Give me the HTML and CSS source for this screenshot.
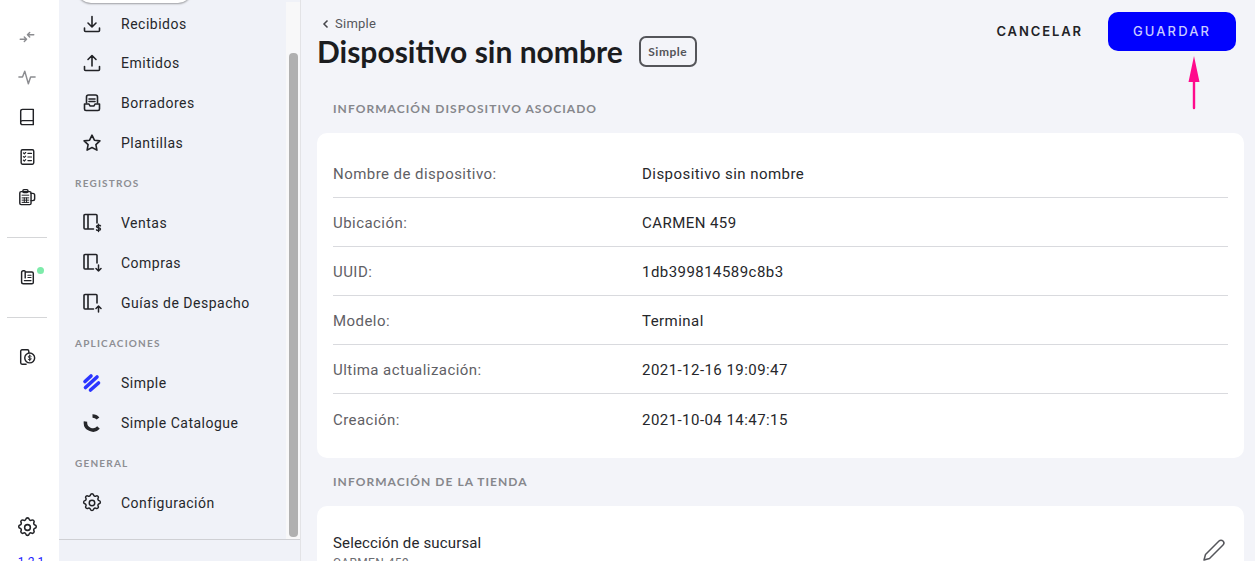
FILE: index.html
```html
<!DOCTYPE html>
<html lang="es">
<head>
<meta charset="utf-8">
<title>Dispositivo sin nombre</title>
<link rel="stylesheet" href="styles.css">
</head>
<body>
<div class="app">
  <nav class="rail">
    <div class="rail-item muted"><svg class="ic" viewBox="0 0 20 20"><path d="M2.500 12.500h7M7 10 9.500 12.500 7 15M17.500 7.500h-7M13 5 10.500 7.500 13 10"/></svg></div>
    <div class="rail-item muted"><svg class="ic" viewBox="0 0 20 20"><path d="M1 10h4l2.500-6.500 4 14 2.500-7.500h5"/></svg></div>
    <div class="rail-item"><svg class="ic" viewBox="0 0 20 20"><path d="M3 16V3.500A2 2 0 0 1 5 1.500h12v17H5a2 2 0 0 1-2-2.500zM3 16a2 2 0 0 1 2-2h12"/></svg></div>
    <div class="rail-item"><svg class="ic" viewBox="0 0 20 20"><rect x="3.500" y="2" width="14" height="16" rx="1.500"/><path d="M6 5.500l1 1 1.500-1.500M11 6h4M6 9.500l1 1 1.500-1.500M11 10h4M6 13.500l1 1 1.500-1.500M11 14h4" stroke-width="1.300"/></svg></div>
    <div class="rail-item"><svg class="ic" viewBox="0 0 20 20"><rect x="2" y="4" width="12.500" height="14.500" rx="1.500"/><rect x="5.500" y="1.800" width="5.500" height="3.200" rx="1"/><path d="M4.500 8h7.500M4.500 11h7.500M4.500 13.500h7.500M4.500 16h7.500M7 11v5M9.500 11v5" stroke-width="1.100"/><path d="M14.500 6H16.500a2 2 0 0 1 2 2v4a2 2 0 0 1-2 2h-2"/></svg></div>
    <div class="rail-sep"></div>
    <div class="rail-item dotted"><svg class="ic" viewBox="0 0 20 20"><path d="M8 4.500h7.500a1.500 1.500 0 0 1 1.500 1.500v10a1.500 1.500 0 0 1-1.500 1.500H6A2 2 0 0 1 4 15.500V5a2 2 0 0 1 2-2h1a1 1 0 0 1 1 1v7"/><path d="M11 8h3.500M11 10.500h3.500M7 14h7.500" stroke-width="1.200"/></svg><span class="dot"></span></div>
    <div class="rail-sep"></div>
    <div class="rail-item"><svg class="ic" viewBox="0 0 20 20"><path d="M9 18H4.500A1.500 1.500 0 0 1 3 16.500V3.500A1.500 1.500 0 0 1 4.500 2h6A1.500 1.500 0 0 1 12 3.500V5"/><circle cx="13" cy="11" r="5.500"/><path d="M14.700 9.200c-.5-.7-3.300-.8-3.300.6 0 1.500 3.300.8 3.300 2.300 0 1.400-2.700 1.300-3.400.5M13 7.700v6.600" stroke-width="1.100"/></svg></div>
    <div class="rail-foot">
      <svg class="ic gear" viewBox="0 0 24 24"><path d="M10.300 3.300a1.750 1.750 0 0 1 3.400 0 1.750 1.750 0 0 0 2.600 1.100 1.750 1.750 0 0 1 2.400 2.400 1.750 1.750 0 0 0 1.100 2.600 1.750 1.750 0 0 1 0 3.400 1.750 1.750 0 0 0-1.100 2.600 1.750 1.750 0 0 1-2.400 2.400 1.750 1.750 0 0 0-2.600 1.100 1.750 1.750 0 0 1-3.400 0 1.750 1.750 0 0 0-2.600-1.100 1.750 1.750 0 0 1-2.400-2.400 1.750 1.750 0 0 0-1.100-2.600 1.750 1.750 0 0 1 0-3.400 1.750 1.750 0 0 0 1.100-2.600 1.750 1.750 0 0 1 2.400-2.400 1.750 1.750 0 0 0 2.600-1.100z"/><circle cx="12" cy="12" r="3"/></svg>
      <span class="version">1.2.1</span>
    </div>
  </nav>

  <aside class="side">
    <div class="side-scroll">
      <div class="side-list">
        <div class="side-pill"></div>
        <a class="side-item first"><svg class="ic" viewBox="0 0 20 20"><path d="M10 2.500v10M6 9l4 4 4-4M2.500 14v2.500a1 1 0 0 0 1 1h13a1 1 0 0 0 1-1V14"/></svg>Recibidos</a>
        <a class="side-item"><svg class="ic" viewBox="0 0 20 20"><path d="M10 13V3M6 6.500l4-4 4 4M2.500 13.500v3a1 1 0 0 0 1 1h13a1 1 0 0 0 1-1v-3"/></svg>Emitidos</a>
        <a class="side-item"><svg class="ic" viewBox="0 0 20 20"><path d="M4.500 10V4a2 2 0 0 1 2-2h7a2 2 0 0 1 2 2v6M7 6h6M7 8.500h6"/><path d="M2.500 11h4.500l1 2h4l1-2h4.500v5a1.500 1.500 0 0 1-1.500 1.500H4A1.500 1.500 0 0 1 2.500 16z"/></svg>Borradores</a>
        <a class="side-item"><svg class="ic" viewBox="0 0 20 20"><path d="M10 2.200l2.400 5 5.500.7-4 3.800 1 5.400-4.900-2.600-4.900 2.600 1-5.400-4-3.800 5.500-.7z"/></svg>Plantillas</a>
        <div class="side-label">REGISTROS</div>
        <a class="side-item"><svg class="ic" viewBox="0 0 20 20"><path d="M15 10V2.500a1 1 0 0 0-1-1H3a1 1 0 0 0-1 1V15a1 1 0 0 0 1 1h8.500M6 1.500V16"/><path d="M18.500 12.800c-.5-.8-4-.8-4 .8 0 1.600 4 .8 4 2.500 0 1.600-3.500 1.600-4 .7M16.500 11.200v7.300" stroke-width="1.400"/></svg>Ventas</a>
        <a class="side-item"><svg class="ic" viewBox="0 0 20 20"><path d="M15 10V2.500a1 1 0 0 0-1-1H3a1 1 0 0 0-1 1V15a1 1 0 0 0 1 1h8.500M6 1.500V16"/><path d="M16.500 12v6M14 15.500l2.500 2.500 2.500-2.500" stroke-width="1.500"/></svg>Compras</a>
        <a class="side-item"><svg class="ic" viewBox="0 0 20 20"><path d="M15 10V2.500a1 1 0 0 0-1-1H3a1 1 0 0 0-1 1V15a1 1 0 0 0 1 1h8.500M6 1.500V16"/><path d="M16.500 19v-6M14 15.500l2.500-2.500 2.500 2.500" stroke-width="1.500"/></svg>Guías de Despacho</a>
        <div class="side-label">APLICACIONES</div>
        <a class="side-item"><svg class="ic brand" viewBox="0 0 20 20"><path d="M3 8.500 9 3M3.500 14.500 15 4M8.500 17 16.500 10"/></svg>Simple</a>
        <a class="side-item"><svg class="ic brand-dark" viewBox="0 0 20 20"><path d="M3.500 8.500a7.500 7.500 0 0 0 13 6M10.500 3a7 7 0 0 1 5.500 2.500"/></svg>Simple Catalogue</a>
        <div class="side-label">GENERAL</div>
        <a class="side-item"><svg class="ic gear-lg" viewBox="0 0 24 24"><path d="M10.300 3.300a1.750 1.750 0 0 1 3.400 0 1.750 1.750 0 0 0 2.600 1.100 1.750 1.750 0 0 1 2.400 2.400 1.750 1.750 0 0 0 1.100 2.600 1.750 1.750 0 0 1 0 3.400 1.750 1.750 0 0 0-1.100 2.600 1.750 1.750 0 0 1-2.400 2.400 1.750 1.750 0 0 0-2.600 1.100 1.750 1.750 0 0 1-3.400 0 1.750 1.750 0 0 0-2.600-1.100 1.750 1.750 0 0 1-2.400-2.400 1.750 1.750 0 0 0-1.100-2.600 1.750 1.750 0 0 1 0-3.400 1.750 1.750 0 0 0 1.100-2.600 1.750 1.750 0 0 1 2.400-2.400 1.750 1.750 0 0 0 2.600-1.100z"/><circle cx="12" cy="12" r="3"/></svg>Configuración</a>
      </div>
      <div class="side-track"><div class="side-thumb"></div></div>
    </div>
  </aside>

  <main class="main">
    <header class="head">
      <div class="head-left">
        <div class="crumb"><svg class="crumb-ic" viewBox="0 0 10 10"><path d="M6.500 1.500 3 5l3.500 3.500"/></svg>Simple</div>
        <div class="title-row">
          <h1 class="title">Dispositivo sin nombre</h1>
          <span class="badge">Simple</span>
        </div>
      </div>
      <div class="actions">
        <button class="btn-text">CANCELAR</button>
        <button class="btn-primary">GUARDAR</button>
      </div>
    </header>

    <h2 class="section">INFORMACIÓN DISPOSITIVO ASOCIADO</h2>
    <section class="card info">
      <div class="row"><span class="row-key">Nombre de dispositivo:</span><span class="row-val">Dispositivo sin nombre</span></div>
      <div class="row"><span class="row-key">Ubicación:</span><span class="row-val">CARMEN 459</span></div>
      <div class="row"><span class="row-key">UUID:</span><span class="row-val">1db399814589c8b3</span></div>
      <div class="row"><span class="row-key">Modelo:</span><span class="row-val">Terminal</span></div>
      <div class="row"><span class="row-key">Ultima actualización:</span><span class="row-val">2021-12-16 19:09:47</span></div>
      <div class="row"><span class="row-key">Creación:</span><span class="row-val">2021-10-04 14:47:15</span></div>
    </section>

    <h2 class="section second">INFORMACIÓN DE LA TIENDA</h2>
    <section class="card store">
      <div class="store-text">
        <div class="store-title">Selección de sucursal</div>
        <div class="store-sub">CARMEN 459</div>
      </div>
      <svg class="pencil" viewBox="0 0 24 24"><path d="M17 3a2.800 2.800 0 0 1 4 4L7.500 20.500 2 22l1.500-5.500z"/></svg>
    </section>

    <svg class="arrow" viewBox="0 0 12 54"><path d="M6 0 11.500 26H7.200V52a1.200 1.200 0 0 1-2.400 0V26H.5z"/></svg>
  </main>
</div>
</body>
</html>
```
FILE: styles.css
```css
* { box-sizing: border-box; }
html, body { margin: 0; height: 561px; overflow: hidden; }
body { font-family: Roboto, "Liberation Sans", sans-serif; color: #212226; background: #f3f4f9; }

.app { display: flex; height: 561px; overflow: hidden; }

.ic { width: 20px; height: 20px; fill: none; stroke: #212226; stroke-width: 1.600; stroke-linecap: round; stroke-linejoin: round; flex: none; }

.rail { width: 59px; flex: none; background: #fff; display: flex; flex-direction: column; padding: 17px 5px 0 0; }
.rail-item { height: 40px; display: flex; align-items: center; justify-content: center; position: relative; flex: none; }
.rail-item .ic { width: 18px; height: 18px; }
.muted .ic { stroke: #8b8c90; }
.rail-sep { height: 40px; display: flex; align-items: center; padding: 0 7px; flex: none; }
.rail-sep::before { content: ""; flex: 1; height: 1px; background: #d5d6d8; }
.dot { position: absolute; left: 37px; top: 10px; width: 7px; height: 7px; border-radius: 50%; background: #7debaa; }
.rail-foot { margin-top: auto; display: flex; flex-direction: column; align-items: center; gap: 16px; height: 45px; flex: none; }
.rail-foot .gear { width: 23px; height: 23px; }
.version { font-size: 12px; line-height: 14px; color: #1a1aff; padding-left: 8px; white-space: nowrap; }

.side { width: 242px; flex: none; background: #f0f2f8; border-right: 1px solid #e3e3e6; }
.side-scroll { display: flex; height: 540px; border-bottom: 1px solid #cfd0d4; }
.side-list { flex: 1; min-width: 0; position: relative; padding-top: 3px; }
.side-pill { position: absolute; left: 18px; top: -12px; width: 115px; height: 15px; background: #fff; border-radius: 0 0 14px 14px; box-shadow: 0 1px 2px rgba(0, 0, 0, .35); }
.side-item { display: flex; align-items: center; gap: 19px; height: 40px; padding-left: 23px; font-size: 14px; letter-spacing: .5px; color: #26272b; white-space: nowrap; }
.side-item.first { margin-top: 1px; height: 39px; }
.gear-lg { width: 22px; height: 22px; margin: 0 -1px; }
.side-label { height: 40px; display: flex; align-items: center; padding-left: 16px; font-family: Lato, sans-serif; font-weight: 700; font-size: 10px; letter-spacing: 1.200px; color: #8d8e93; }
.brand { stroke: #2b35ff; stroke-width: 3.600; }
.brand-dark { stroke: #26272b; stroke-width: 3.500; stroke-linecap: butt; }

.side-track { width: 14px; flex: none; background: #f8f8f9; margin-top: 2px; padding: 51px 2px 2px 3px; }
.side-thumb { height: 484px; background: #b0b0b0; border-radius: 4px; }

.main { flex: 1; min-width: 0; position: relative; padding: 0 11px 0 16px; background: #f3f4f9; }
.head { display: flex; justify-content: space-between; align-items: flex-start; height: 84px; }
.head-left { padding-top: 15px; }
.crumb { display: flex; align-items: center; gap: 4px; height: 17px; font-size: 13px; letter-spacing: .25px; color: #55565b; padding-left: 4px; }
.crumb-ic { width: 10px; height: 10px; fill: none; stroke: #44454a; stroke-width: 1.500; }
.title-row { display: flex; align-items: center; gap: 16px; margin-top: 3px; }
.title { margin: 0; font-family: Lato, sans-serif; font-weight: 700; font-size: 30px; line-height: 32px; color: #1b1c1f; white-space: nowrap; }
.badge { width: 58px; height: 31px; border: 2px solid #54555a; border-radius: 7px; display: flex; align-items: center; justify-content: center; font-family: Lato, sans-serif; font-weight: 700; font-size: 12px; letter-spacing: .5px; color: #54555a; }
.actions { display: flex; align-items: center; gap: 25px; padding-top: 12px; padding-right: 8px; }
.btn-text, .btn-primary { border: 0; font-family: Inter, sans-serif; font-weight: 600; font-size: 13px; letter-spacing: 1.900px; background: none; padding: 0 0 1px; }
.btn-text { color: #222327; }
.btn-primary { width: 128px; height: 39px; background: #0000ff; color: #c9ccff; border-radius: 10px; font-weight: 500; letter-spacing: 2.100px; }

.section { margin: 0; height: 49px; padding: 17px 0 0 16px; font-family: Lato, sans-serif; font-weight: 700; font-size: 12px; line-height: 16px; letter-spacing: 1.050px; color: #86878c; }
.section.second { margin-top: 0; height: 48px; padding-top: 16px; }

.card { background: #fff; border-radius: 10px; }
.info { height: 325px; padding: 16px 16px 0; }
.row { height: 49px; display: flex; align-items: center; padding-top: 2px; font-size: 15px; letter-spacing: .45px; border-bottom: 1px solid #d9dade; }
.row:last-child { border-bottom: 0; }
.row-key { width: 309px; flex: none; color: #5f6065; }
.row-val { color: #26272b; }

.store { height: 90px; padding: 29px 16px 0; display: flex; justify-content: space-between; align-items: flex-start; }
.store-title { font-size: 15px; line-height: 16px; letter-spacing: .15px; color: #26272b; }
.store-sub { font-size: 12px; line-height: 14px; margin-top: 5px; color: #6c6d72; letter-spacing: .4px; }
.pencil { width: 24px; height: 24px; margin: 3px 2px 0 0; fill: none; stroke: #55565b; stroke-width: 1.500; stroke-linecap: round; stroke-linejoin: round; }

.arrow { position: absolute; left: 886.500px; top: 56px; width: 12px; height: 54px; fill: #ff0a8c; }
```
